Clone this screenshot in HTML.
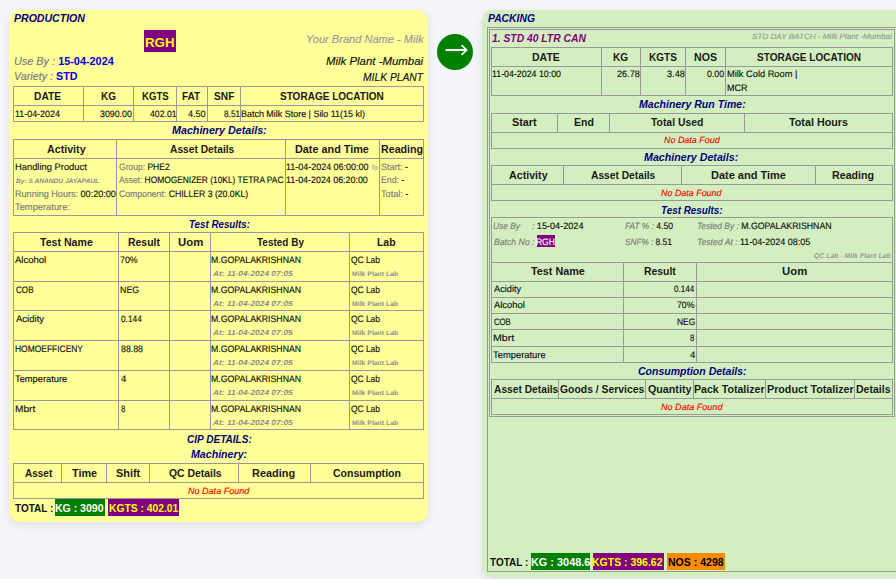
<!DOCTYPE html>
<html><head><meta charset="utf-8"><style>
html,body{margin:0;padding:0;width:896px;height:579px;overflow:hidden;background:#f4f5f9;font-family:"Liberation Sans", sans-serif;}
.t{position:absolute;line-height:0;white-space:nowrap;transform-origin:0 0;}
.gp{text-rendering:geometricPrecision;}
.t span.n{-webkit-text-stroke:0.15px currentColor;}
.l{position:absolute;}
.circ{position:absolute;}
.card{position:absolute;border-radius:11px;box-shadow:0 3px 9px rgba(0,0,0,0.09);}
</style></head><body>
<div class="card" style="left:9px;top:10px;width:419px;height:512px;background:#ffff99"></div>
<div id="t1" class="t" style="left:14.241px;top:18.492px;font-size:10.7px;transform:scaleX(0.9869)"><span class="b" style="font-size:10.7px;font-weight:bold;font-style:italic;color:#000080">PRODUCTION</span></div>
<div class="l" style="left:144px;top:30px;width:32px;height:22px;background:#800080;"></div>
<div id="t2" class="t" style="left:144.718px;top:42.557px;font-size:13.4px;transform:scaleX(0.9936)"><span class="b" style="font-size:13.4px;font-weight:bold;font-style:normal;color:#ffff00">RGH</span></div>
<div id="t3" class="t" style="left:305.984px;top:38.527px;font-size:10.6px;transform:scaleX(1.0441)"><span class="n" style="font-size:10.6px;font-weight:normal;font-style:italic;color:#9a9a9a">Your Brand Name - Milk</span></div>
<div id="t4" class="t" style="left:13.590px;top:61.596px;font-size:10.4px;transform:scaleX(1.0468)"><span class="n" style="font-size:10.4px;font-weight:normal;font-style:italic;color:#7a7a7a">Use By : </span><span class="b" style="font-size:10.4px;font-weight:bold;font-style:normal;color:#0000e6">15-04-2024</span></div>
<div id="t5" class="t" style="left:326.401px;top:60.527px;font-size:10.6px;transform:scaleX(1.0775)"><span class="n" style="font-size:10.6px;font-weight:normal;font-style:italic;color:#111">Milk Plant -Mumbai</span></div>
<div id="t6" class="t" style="left:13.582px;top:76.596px;font-size:10.4px;transform:scaleX(1.0331)"><span class="n" style="font-size:10.4px;font-weight:normal;font-style:italic;color:#7a7a7a">Variety : </span><span class="b" style="font-size:10.4px;font-weight:bold;font-style:normal;color:#0000e6">STD</span></div>
<div id="t7" class="t" style="left:362.811px;top:76.527px;font-size:10.6px;transform:scaleX(0.9716)"><span class="n" style="font-size:10.6px;font-weight:normal;font-style:italic;color:#111">MILK PLANT</span></div>
<div class="l" style="left:13px;top:86px;width:411px;height:1px;background:#999"></div>
<div class="l" style="left:13px;top:105px;width:411px;height:1px;background:#999"></div>
<div class="l" style="left:13px;top:121px;width:411px;height:1px;background:#999"></div>
<div class="l" style="left:13px;top:86px;width:1px;height:36px;background:#999"></div>
<div class="l" style="left:423px;top:86px;width:1px;height:36px;background:#999"></div>
<div class="l" style="left:83px;top:86px;width:1px;height:36px;background:#999"></div>
<div class="l" style="left:133px;top:86px;width:1px;height:36px;background:#999"></div>
<div class="l" style="left:176px;top:86px;width:1px;height:36px;background:#999"></div>
<div class="l" style="left:207px;top:86px;width:1px;height:36px;background:#999"></div>
<div class="l" style="left:240px;top:86px;width:1px;height:36px;background:#999"></div>
<div id="t8" class="t" style="left:34.312px;top:96.596px;font-size:10.4px;transform:scaleX(0.9834)"><span class="b" style="font-size:10.4px;font-weight:bold;font-style:normal;color:#1a1a1a">DATE</span></div>
<div id="t9" class="t" style="left:100.849px;top:96.596px;font-size:10.4px;transform:scaleX(0.9621)"><span class="b" style="font-size:10.4px;font-weight:bold;font-style:normal;color:#1a1a1a">KG</span></div>
<div id="t10" class="t" style="left:141.695px;top:96.596px;font-size:10.4px;transform:scaleX(0.9281)"><span class="b" style="font-size:10.4px;font-weight:bold;font-style:normal;color:#1a1a1a">KGTS</span></div>
<div id="t11" class="t" style="left:181.895px;top:96.596px;font-size:10.4px;transform:scaleX(0.9663)"><span class="b" style="font-size:10.4px;font-weight:bold;font-style:normal;color:#1a1a1a">FAT</span></div>
<div id="t12" class="t" style="left:213.881px;top:96.596px;font-size:10.4px;transform:scaleX(0.9797)"><span class="b" style="font-size:10.4px;font-weight:bold;font-style:normal;color:#1a1a1a">SNF</span></div>
<div id="t13" class="t" style="left:280.096px;top:96.596px;font-size:10.4px;transform:scaleX(0.9642)"><span class="b" style="font-size:10.4px;font-weight:bold;font-style:normal;color:#1a1a1a">STORAGE LOCATION</span></div>
<div id="t14" class="t gp" style="left:14.500px;top:113.943px;font-size:9.4px;transform:scaleX(0.9488)"><span class="n" style="font-size:9.4px;font-weight:normal;font-style:normal;color:#111">11-04-2024</span></div>
<div id="t15" class="t gp" style="left:100.323px;top:113.943px;font-size:9.4px;transform:scaleX(0.9404)"><span class="n" style="font-size:9.4px;font-weight:normal;font-style:normal;color:#111">3090.00</span></div>
<div id="t16" class="t gp" style="left:150.000px;top:113.943px;font-size:9.4px;transform:scaleX(0.9253)"><span class="n" style="font-size:9.4px;font-weight:normal;font-style:normal;color:#111">402.01</span></div>
<div id="t17" class="t gp" style="left:188.398px;top:113.943px;font-size:9.4px;transform:scaleX(0.9675)"><span class="n" style="font-size:9.4px;font-weight:normal;font-style:normal;color:#111">4.50</span></div>
<div id="t18" class="t gp" style="left:223.968px;top:113.943px;font-size:9.4px;transform:scaleX(0.8796)"><span class="n" style="font-size:9.4px;font-weight:normal;font-style:normal;color:#111">8.51</span></div>
<div id="t19" class="t gp" style="left:240.987px;top:113.943px;font-size:9.4px;transform:scaleX(0.9541)"><span class="n" style="font-size:9.4px;font-weight:normal;font-style:normal;color:#111">Batch Milk Store | Silo 11(15 kl)</span></div>
<div id="t20" class="t" style="left:172.212px;top:130.596px;font-size:10.4px;transform:scaleX(1.0309)"><span class="b" style="font-size:10.4px;font-weight:bold;font-style:italic;color:#000080">Machinery Details:</span></div>
<div class="l" style="left:13px;top:139px;width:411px;height:1px;background:#999"></div>
<div class="l" style="left:13px;top:158px;width:411px;height:1px;background:#999"></div>
<div class="l" style="left:13px;top:215px;width:411px;height:1px;background:#999"></div>
<div class="l" style="left:13px;top:139px;width:1px;height:77px;background:#999"></div>
<div class="l" style="left:423px;top:139px;width:1px;height:77px;background:#999"></div>
<div class="l" style="left:116px;top:139px;width:1px;height:77px;background:#999"></div>
<div class="l" style="left:285px;top:139px;width:1px;height:77px;background:#999"></div>
<div class="l" style="left:379px;top:139px;width:1px;height:77px;background:#999"></div>
<div id="t21" class="t" style="left:46.984px;top:149.596px;font-size:10.4px;transform:scaleX(1.0280)"><span class="b" style="font-size:10.4px;font-weight:bold;font-style:normal;color:#1a1a1a">Activity</span></div>
<div id="t22" class="t" style="left:170.000px;top:149.596px;font-size:10.4px;transform:scaleX(0.9849)"><span class="b" style="font-size:10.4px;font-weight:bold;font-style:normal;color:#1a1a1a">Asset Details</span></div>
<div id="t23" class="t" style="left:294.990px;top:149.596px;font-size:10.4px;transform:scaleX(1.0430)"><span class="b" style="font-size:10.4px;font-weight:bold;font-style:normal;color:#1a1a1a">Date and Time</span></div>
<div id="t24" class="t" style="left:380.948px;top:149.596px;font-size:10.4px;transform:scaleX(1.0264)"><span class="b" style="font-size:10.4px;font-weight:bold;font-style:normal;color:#1a1a1a">Reading</span></div>
<div id="t25" class="t gp" style="left:14.798px;top:166.943px;font-size:9.4px;transform:scaleX(0.9982)"><span class="n" style="font-size:9.4px;font-weight:normal;font-style:normal;color:#111">Handling Product</span></div>
<div id="t26" class="t gp" style="left:15.794px;top:181.982px;font-size:6.4px;transform:scaleX(1.0327)"><span class="b" style="font-size:6.4px;font-weight:bold;font-style:italic;color:#8a8a8a">By: S ANANDU JAYAPAUL</span></div>
<div id="t27" class="t gp" style="left:14.782px;top:193.943px;font-size:9.4px;transform:scaleX(0.9676)"><span class="n" style="font-size:9.4px;font-weight:normal;font-style:normal;color:#7a7a7a">Running Hours: </span><span class="n" style="font-size:9.4px;font-weight:normal;font-style:normal;color:#111">00:20:00</span></div>
<div id="t28" class="t gp" style="left:14.722px;top:206.943px;font-size:9.4px;transform:scaleX(0.9953)"><span class="n" style="font-size:9.4px;font-weight:normal;font-style:normal;color:#7a7a7a">Temperature:</span></div>
<div id="t29" class="t gp" style="left:118.585px;top:166.943px;font-size:9.4px;transform:scaleX(0.9088)"><span class="n" style="font-size:9.4px;font-weight:normal;font-style:normal;color:#7a7a7a">Group: </span><span class="n" style="font-size:9.4px;font-weight:normal;font-style:normal;color:#111">PHE2</span></div>
<div id="t30" class="t gp" style="left:118.595px;top:179.943px;font-size:9.4px;transform:scaleX(0.8934)"><span class="n" style="font-size:9.4px;font-weight:normal;font-style:normal;color:#7a7a7a">Asset: </span><span class="n" style="font-size:9.4px;font-weight:normal;font-style:normal;color:#111">HOMOGENIZER (10KL) TETRA PAC</span></div>
<div id="t31" class="t gp" style="left:118.603px;top:193.943px;font-size:9.4px;transform:scaleX(0.9245)"><span class="n" style="font-size:9.4px;font-weight:normal;font-style:normal;color:#7a7a7a">Component: </span><span class="n" style="font-size:9.4px;font-weight:normal;font-style:normal;color:#111">CHILLER 3 (20.0KL)</span></div>
<div id="t32" class="t gp" style="left:286.192px;top:166.943px;font-size:9.4px;transform:scaleX(0.9545)"><span class="n" style="font-size:9.4px;font-weight:normal;font-style:normal;color:#111">11-04-2024 06:00:00 </span><span class="n" style="font-size:6.5px;font-weight:normal;font-style:italic;color:#9a9a9a">To</span></div>
<div id="t33" class="t gp" style="left:286.176px;top:179.943px;font-size:9.4px;transform:scaleX(0.9470)"><span class="n" style="font-size:9.4px;font-weight:normal;font-style:normal;color:#111">11-04-2024 06:20:00</span></div>
<div id="t34" class="t gp" style="left:380.761px;top:166.943px;font-size:9.4px;transform:scaleX(0.9583)"><span class="n" style="font-size:9.4px;font-weight:normal;font-style:normal;color:#7a7a7a">Start: </span><span class="n" style="font-size:9.4px;font-weight:normal;font-style:normal;color:#111">-</span></div>
<div id="t35" class="t gp" style="left:380.727px;top:179.943px;font-size:9.4px;transform:scaleX(0.9302)"><span class="n" style="font-size:9.4px;font-weight:normal;font-style:normal;color:#7a7a7a">End: </span><span class="n" style="font-size:9.4px;font-weight:normal;font-style:normal;color:#111">-</span></div>
<div id="t36" class="t gp" style="left:380.739px;top:193.943px;font-size:9.4px;transform:scaleX(0.9730)"><span class="n" style="font-size:9.4px;font-weight:normal;font-style:normal;color:#7a7a7a">Total: </span><span class="n" style="font-size:9.4px;font-weight:normal;font-style:normal;color:#111">-</span></div>
<div id="t37" class="t" style="left:188.975px;top:224.596px;font-size:10.4px;transform:scaleX(0.9391)"><span class="b" style="font-size:10.4px;font-weight:bold;font-style:italic;color:#000080">Test Results:</span></div>
<div class="l" style="left:13px;top:232px;width:411px;height:1px;background:#999"></div>
<div class="l" style="left:13px;top:251px;width:411px;height:1px;background:#999"></div>
<div class="l" style="left:13px;top:281px;width:411px;height:1px;background:#999"></div>
<div class="l" style="left:13px;top:310px;width:411px;height:1px;background:#999"></div>
<div class="l" style="left:13px;top:340px;width:411px;height:1px;background:#999"></div>
<div class="l" style="left:13px;top:370px;width:411px;height:1px;background:#999"></div>
<div class="l" style="left:13px;top:400px;width:411px;height:1px;background:#999"></div>
<div class="l" style="left:13px;top:429px;width:411px;height:1px;background:#999"></div>
<div class="l" style="left:13px;top:232px;width:1px;height:198px;background:#999"></div>
<div class="l" style="left:423px;top:232px;width:1px;height:198px;background:#999"></div>
<div class="l" style="left:118px;top:232px;width:1px;height:198px;background:#999"></div>
<div class="l" style="left:169px;top:232px;width:1px;height:198px;background:#999"></div>
<div class="l" style="left:210px;top:232px;width:1px;height:198px;background:#999"></div>
<div class="l" style="left:349px;top:232px;width:1px;height:198px;background:#999"></div>
<div id="t38" class="t" style="left:40.003px;top:242.596px;font-size:10.4px;transform:scaleX(1.0191)"><span class="b" style="font-size:10.4px;font-weight:bold;font-style:normal;color:#1a1a1a">Test Name</span></div>
<div id="t39" class="t" style="left:127.964px;top:242.596px;font-size:10.4px;transform:scaleX(1.0039)"><span class="b" style="font-size:10.4px;font-weight:bold;font-style:normal;color:#1a1a1a">Result</span></div>
<div id="t40" class="t" style="left:177.939px;top:242.596px;font-size:10.4px;transform:scaleX(1.0945)"><span class="b" style="font-size:10.4px;font-weight:bold;font-style:normal;color:#1a1a1a">Uom</span></div>
<div id="t41" class="t" style="left:256.987px;top:242.596px;font-size:10.4px;transform:scaleX(0.9599)"><span class="b" style="font-size:10.4px;font-weight:bold;font-style:normal;color:#1a1a1a">Tested By</span></div>
<div id="t42" class="t" style="left:376.950px;top:242.596px;font-size:10.4px;transform:scaleX(1.0027)"><span class="b" style="font-size:10.4px;font-weight:bold;font-style:normal;color:#1a1a1a">Lab</span></div>
<div id="t43" class="t gp" style="left:15.267px;top:259.943px;font-size:9.4px;transform:scaleX(1.0139)"><span class="n" style="font-size:9.4px;font-weight:normal;font-style:normal;color:#111">Alcohol</span></div>
<div id="t44" class="t gp" style="left:119.676px;top:259.943px;font-size:9.4px;transform:scaleX(0.9401)"><span class="n" style="font-size:9.4px;font-weight:normal;font-style:normal;color:#111">70%</span></div>
<div id="t45" class="t gp" style="left:211.493px;top:259.943px;font-size:9.4px;transform:scaleX(0.9315)"><span class="n" style="font-size:9.4px;font-weight:normal;font-style:normal;color:#111">M.GOPALAKRISHNAN</span></div>
<div id="t46" class="t gp" style="left:212.751px;top:273.636px;font-size:7.4px;transform:scaleX(1.1303)"><span class="b" style="font-size:7.4px;font-weight:bold;font-style:italic;color:#8a8a8a">At: 11-04-2024 07:05</span></div>
<div id="t47" class="t gp" style="left:351.361px;top:259.943px;font-size:9.4px;transform:scaleX(0.8956)"><span class="n" style="font-size:9.4px;font-weight:normal;font-style:normal;color:#111">QC Lab</span></div>
<div id="t48" class="t gp" style="left:351.570px;top:274.948px;font-size:6.5px;transform:scaleX(1.0584)"><span class="b" style="font-size:6.5px;font-weight:bold;font-style:normal;color:#8f8f8f">Milk Plant Lab</span></div>
<div id="t49" class="t gp" style="left:15.708px;top:289.943px;font-size:9.4px;transform:scaleX(0.8624)"><span class="n" style="font-size:9.4px;font-weight:normal;font-style:normal;color:#111">COB</span></div>
<div id="t50" class="t gp" style="left:119.661px;top:289.943px;font-size:9.4px;transform:scaleX(0.9425)"><span class="n" style="font-size:9.4px;font-weight:normal;font-style:normal;color:#111">NEG</span></div>
<div id="t51" class="t gp" style="left:211.493px;top:289.943px;font-size:9.4px;transform:scaleX(0.9315)"><span class="n" style="font-size:9.4px;font-weight:normal;font-style:normal;color:#111">M.GOPALAKRISHNAN</span></div>
<div id="t52" class="t gp" style="left:212.751px;top:303.636px;font-size:7.4px;transform:scaleX(1.1303)"><span class="b" style="font-size:7.4px;font-weight:bold;font-style:italic;color:#8a8a8a">At: 11-04-2024 07:05</span></div>
<div id="t53" class="t gp" style="left:351.361px;top:289.943px;font-size:9.4px;transform:scaleX(0.8956)"><span class="n" style="font-size:9.4px;font-weight:normal;font-style:normal;color:#111">QC Lab</span></div>
<div id="t54" class="t gp" style="left:351.570px;top:304.948px;font-size:6.5px;transform:scaleX(1.0584)"><span class="b" style="font-size:6.5px;font-weight:bold;font-style:normal;color:#8f8f8f">Milk Plant Lab</span></div>
<div id="t55" class="t gp" style="left:15.719px;top:318.943px;font-size:9.4px;transform:scaleX(1.0158)"><span class="n" style="font-size:9.4px;font-weight:normal;font-style:normal;color:#111">Acidity</span></div>
<div id="t56" class="t gp" style="left:120.679px;top:318.943px;font-size:9.4px;transform:scaleX(0.8857)"><span class="n" style="font-size:9.4px;font-weight:normal;font-style:normal;color:#111">0.144</span></div>
<div id="t57" class="t gp" style="left:211.493px;top:318.943px;font-size:9.4px;transform:scaleX(0.9315)"><span class="n" style="font-size:9.4px;font-weight:normal;font-style:normal;color:#111">M.GOPALAKRISHNAN</span></div>
<div id="t58" class="t gp" style="left:212.751px;top:332.636px;font-size:7.4px;transform:scaleX(1.1303)"><span class="b" style="font-size:7.4px;font-weight:bold;font-style:italic;color:#8a8a8a">At: 11-04-2024 07:05</span></div>
<div id="t59" class="t gp" style="left:351.361px;top:318.943px;font-size:9.4px;transform:scaleX(0.8956)"><span class="n" style="font-size:9.4px;font-weight:normal;font-style:normal;color:#111">QC Lab</span></div>
<div id="t60" class="t gp" style="left:351.570px;top:333.948px;font-size:6.5px;transform:scaleX(1.0584)"><span class="b" style="font-size:6.5px;font-weight:bold;font-style:normal;color:#8f8f8f">Milk Plant Lab</span></div>
<div id="t61" class="t gp" style="left:14.731px;top:348.943px;font-size:9.4px;transform:scaleX(0.9004)"><span class="n" style="font-size:9.4px;font-weight:normal;font-style:normal;color:#111">HOMOEFFICENY</span></div>
<div id="t62" class="t gp" style="left:120.682px;top:348.943px;font-size:9.4px;transform:scaleX(0.9384)"><span class="n" style="font-size:9.4px;font-weight:normal;font-style:normal;color:#111">88.88</span></div>
<div id="t63" class="t gp" style="left:211.493px;top:348.943px;font-size:9.4px;transform:scaleX(0.9315)"><span class="n" style="font-size:9.4px;font-weight:normal;font-style:normal;color:#111">M.GOPALAKRISHNAN</span></div>
<div id="t64" class="t gp" style="left:212.751px;top:362.636px;font-size:7.4px;transform:scaleX(1.1303)"><span class="b" style="font-size:7.4px;font-weight:bold;font-style:italic;color:#8a8a8a">At: 11-04-2024 07:05</span></div>
<div id="t65" class="t gp" style="left:351.361px;top:348.943px;font-size:9.4px;transform:scaleX(0.8956)"><span class="n" style="font-size:9.4px;font-weight:normal;font-style:normal;color:#111">QC Lab</span></div>
<div id="t66" class="t gp" style="left:351.570px;top:363.948px;font-size:6.5px;transform:scaleX(1.0584)"><span class="b" style="font-size:6.5px;font-weight:bold;font-style:normal;color:#8f8f8f">Milk Plant Lab</span></div>
<div id="t67" class="t gp" style="left:14.705px;top:378.943px;font-size:9.4px;transform:scaleX(0.9914)"><span class="n" style="font-size:9.4px;font-weight:normal;font-style:normal;color:#111">Temperature</span></div>
<div id="t68" class="t gp" style="left:120.698px;top:378.943px;font-size:9.4px;transform:scaleX(1.0283)"><span class="n" style="font-size:9.4px;font-weight:normal;font-style:normal;color:#111">4</span></div>
<div id="t69" class="t gp" style="left:211.493px;top:378.943px;font-size:9.4px;transform:scaleX(0.9315)"><span class="n" style="font-size:9.4px;font-weight:normal;font-style:normal;color:#111">M.GOPALAKRISHNAN</span></div>
<div id="t70" class="t gp" style="left:212.751px;top:392.636px;font-size:7.4px;transform:scaleX(1.1303)"><span class="b" style="font-size:7.4px;font-weight:bold;font-style:italic;color:#8a8a8a">At: 11-04-2024 07:05</span></div>
<div id="t71" class="t gp" style="left:351.361px;top:378.943px;font-size:9.4px;transform:scaleX(0.8956)"><span class="n" style="font-size:9.4px;font-weight:normal;font-style:normal;color:#111">QC Lab</span></div>
<div id="t72" class="t gp" style="left:351.570px;top:393.948px;font-size:6.5px;transform:scaleX(1.0584)"><span class="b" style="font-size:6.5px;font-weight:bold;font-style:normal;color:#8f8f8f">Milk Plant Lab</span></div>
<div id="t73" class="t gp" style="left:14.732px;top:408.943px;font-size:9.4px;transform:scaleX(1.0778)"><span class="n" style="font-size:9.4px;font-weight:normal;font-style:normal;color:#111">Mbrt</span></div>
<div id="t74" class="t gp" style="left:120.724px;top:408.943px;font-size:9.4px;transform:scaleX(0.8227)"><span class="n" style="font-size:9.4px;font-weight:normal;font-style:normal;color:#111">8</span></div>
<div id="t75" class="t gp" style="left:211.493px;top:408.943px;font-size:9.4px;transform:scaleX(0.9315)"><span class="n" style="font-size:9.4px;font-weight:normal;font-style:normal;color:#111">M.GOPALAKRISHNAN</span></div>
<div id="t76" class="t gp" style="left:212.751px;top:422.636px;font-size:7.4px;transform:scaleX(1.1303)"><span class="b" style="font-size:7.4px;font-weight:bold;font-style:italic;color:#8a8a8a">At: 11-04-2024 07:05</span></div>
<div id="t77" class="t gp" style="left:351.361px;top:408.943px;font-size:9.4px;transform:scaleX(0.8956)"><span class="n" style="font-size:9.4px;font-weight:normal;font-style:normal;color:#111">QC Lab</span></div>
<div id="t78" class="t gp" style="left:351.570px;top:423.948px;font-size:6.5px;transform:scaleX(1.0584)"><span class="b" style="font-size:6.5px;font-weight:bold;font-style:normal;color:#8f8f8f">Milk Plant Lab</span></div>
<div id="t79" class="t" style="left:186.790px;top:439.596px;font-size:10.4px;transform:scaleX(0.9677)"><span class="b" style="font-size:10.4px;font-weight:bold;font-style:italic;color:#000080">CIP DETAILS:</span></div>
<div id="t80" class="t" style="left:190.803px;top:454.596px;font-size:10.4px;transform:scaleX(1.0227)"><span class="b" style="font-size:10.4px;font-weight:bold;font-style:italic;color:#000080">Machinery:</span></div>
<div class="l" style="left:13px;top:463px;width:411px;height:1px;background:#999"></div>
<div class="l" style="left:13px;top:482px;width:411px;height:1px;background:#999"></div>
<div class="l" style="left:13px;top:498px;width:411px;height:1px;background:#999"></div>
<div class="l" style="left:13px;top:463px;width:1px;height:36px;background:#999"></div>
<div class="l" style="left:423px;top:463px;width:1px;height:36px;background:#999"></div>
<div class="l" style="left:61px;top:463px;width:1px;height:20px;background:#999"></div>
<div class="l" style="left:106px;top:463px;width:1px;height:20px;background:#999"></div>
<div class="l" style="left:149px;top:463px;width:1px;height:20px;background:#999"></div>
<div class="l" style="left:238px;top:463px;width:1px;height:20px;background:#999"></div>
<div class="l" style="left:310px;top:463px;width:1px;height:20px;background:#999"></div>
<div id="t81" class="t" style="left:25.000px;top:473.596px;font-size:10.4px;transform:scaleX(0.9638)"><span class="b" style="font-size:10.4px;font-weight:bold;font-style:normal;color:#1a1a1a">Asset</span></div>
<div id="t82" class="t" style="left:72.000px;top:473.596px;font-size:10.4px;transform:scaleX(1.0442)"><span class="b" style="font-size:10.4px;font-weight:bold;font-style:normal;color:#1a1a1a">Time</span></div>
<div id="t83" class="t" style="left:115.965px;top:473.596px;font-size:10.4px;transform:scaleX(1.0458)"><span class="b" style="font-size:10.4px;font-weight:bold;font-style:normal;color:#1a1a1a">Shift</span></div>
<div id="t84" class="t" style="left:168.976px;top:473.596px;font-size:10.4px;transform:scaleX(1.0009)"><span class="b" style="font-size:10.4px;font-weight:bold;font-style:normal;color:#1a1a1a">QC Details</span></div>
<div id="t85" class="t" style="left:251.999px;top:473.596px;font-size:10.4px;transform:scaleX(1.0505)"><span class="b" style="font-size:10.4px;font-weight:bold;font-style:normal;color:#1a1a1a">Reading</span></div>
<div id="t86" class="t" style="left:333.000px;top:473.596px;font-size:10.4px;transform:scaleX(1.0149)"><span class="b" style="font-size:10.4px;font-weight:bold;font-style:normal;color:#1a1a1a">Consumption</span></div>
<div id="t87" class="t gp" style="left:187.500px;top:491.082px;font-size:9.0px;transform:scaleX(1.0042)"><span class="n" style="font-size:9.0px;font-weight:normal;font-style:italic;color:#ff0000">No Data Found</span></div>
<div id="t88" class="t" style="left:15.000px;top:508.458px;font-size:10.8px;transform:scaleX(0.9232)"><span class="b" style="font-size:10.8px;font-weight:bold;font-style:normal;color:#111">TOTAL :</span></div>
<div class="l" style="left:55px;top:499px;width:50px;height:17px;background:#008000;"></div>
<div id="t89" class="t" style="left:55.389px;top:508.458px;font-size:10.8px;transform:scaleX(0.9741)"><span class="b" style="font-size:10.8px;font-weight:bold;font-style:normal;color:#ffffff">KG : 3090</span></div>
<div class="l" style="left:108px;top:499px;width:71px;height:17px;background:#800080;"></div>
<div id="t90" class="t" style="left:109.150px;top:508.458px;font-size:10.8px;transform:scaleX(0.9544)"><span class="b" style="font-size:10.8px;font-weight:bold;font-style:normal;color:#ffff00">KGTS : 402.01</span></div>
<div class="circ" style="left:437px;top:34px;width:36px;height:36px;border-radius:50%;background:#008000"></div>
<svg style="position:absolute;left:437px;top:34px" width="36" height="36"><path d="M8.5 16 H29" stroke="#fff" stroke-width="2.1" fill="none"/><path d="M24.6 11.1 L29.6 16 L24.6 20.9" stroke="#fff" stroke-width="1.7" fill="none"/></svg>
<div class="card" style="left:482px;top:10px;width:440px;height:567px;background:#d4efbf"></div>
<div id="t91" class="t" style="left:487.634px;top:18.666px;font-size:10.2px;transform:scaleX(1.0154)"><span class="b" style="font-size:10.2px;font-weight:bold;font-style:italic;color:#000080">PACKING</span></div>
<div class="l" style="left:487px;top:27px;width:1px;height:545px;background:#999"></div>
<div class="l" style="left:487px;top:27px;width:410px;height:1px;background:#999"></div>
<div class="l" style="left:487px;top:571px;width:410px;height:1px;background:#999"></div>
<div class="l" style="left:489px;top:29px;width:1px;height:388px;background:#999"></div>
<div class="l" style="left:489px;top:29px;width:406px;height:1px;background:#999"></div>
<div class="l" style="left:489px;top:416px;width:406px;height:1px;background:#999"></div>
<div class="l" style="left:894px;top:29px;width:1px;height:388px;background:#999"></div>
<div id="t92" class="t" style="left:492.403px;top:38.458px;font-size:10.8px;transform:scaleX(0.9558)"><span class="b" style="font-size:10.8px;font-weight:bold;font-style:italic;color:#800080">1. STD 40 LTR CAN</span></div>
<div id="t93" class="t gp" style="left:751.985px;top:36.532px;font-size:7.7px;transform:scaleX(1.0565)"><span class="n" style="font-size:7.7px;font-weight:normal;font-style:italic;color:#9a9a9a">STD DAY BATCH - Milk Plant -Mumbai</span></div>
<div class="l" style="left:491px;top:47px;width:402px;height:1px;background:#999"></div>
<div class="l" style="left:491px;top:66px;width:402px;height:1px;background:#999"></div>
<div class="l" style="left:491px;top:95px;width:402px;height:1px;background:#999"></div>
<div class="l" style="left:491px;top:47px;width:1px;height:49px;background:#999"></div>
<div class="l" style="left:892px;top:47px;width:1px;height:49px;background:#999"></div>
<div class="l" style="left:601px;top:47px;width:1px;height:49px;background:#999"></div>
<div class="l" style="left:640px;top:47px;width:1px;height:49px;background:#999"></div>
<div class="l" style="left:685px;top:47px;width:1px;height:49px;background:#999"></div>
<div class="l" style="left:725px;top:47px;width:1px;height:49px;background:#999"></div>
<div id="t94" class="t" style="left:532.398px;top:57.596px;font-size:10.4px;transform:scaleX(1.0120)"><span class="b" style="font-size:10.4px;font-weight:bold;font-style:normal;color:#1a1a1a">DATE</span></div>
<div id="t95" class="t" style="left:612.810px;top:57.596px;font-size:10.4px;transform:scaleX(0.9755)"><span class="b" style="font-size:10.4px;font-weight:bold;font-style:normal;color:#1a1a1a">KG</span></div>
<div id="t96" class="t" style="left:648.716px;top:57.596px;font-size:10.4px;transform:scaleX(0.9658)"><span class="b" style="font-size:10.4px;font-weight:bold;font-style:normal;color:#1a1a1a">KGTS</span></div>
<div id="t97" class="t" style="left:693.598px;top:57.596px;font-size:10.4px;transform:scaleX(1.0221)"><span class="b" style="font-size:10.4px;font-weight:bold;font-style:normal;color:#1a1a1a">NOS</span></div>
<div id="t98" class="t" style="left:757.201px;top:57.596px;font-size:10.4px;transform:scaleX(0.9670)"><span class="b" style="font-size:10.4px;font-weight:bold;font-style:normal;color:#1a1a1a">STORAGE LOCATION</span></div>
<div id="t99" class="t gp" style="left:491.585px;top:73.943px;font-size:9.4px;transform:scaleX(0.9409)"><span class="n" style="font-size:9.4px;font-weight:normal;font-style:normal;color:#111">11-04-2024 10:00</span></div>
<div id="t100" class="t gp" style="left:616.868px;top:73.943px;font-size:9.4px;transform:scaleX(0.9709)"><span class="n" style="font-size:9.4px;font-weight:normal;font-style:normal;color:#111">26.78</span></div>
<div id="t101" class="t gp" style="left:667.000px;top:73.943px;font-size:9.4px;transform:scaleX(0.9796)"><span class="n" style="font-size:9.4px;font-weight:normal;font-style:normal;color:#111">3.48</span></div>
<div id="t102" class="t gp" style="left:706.802px;top:73.943px;font-size:9.4px;transform:scaleX(0.9351)"><span class="n" style="font-size:9.4px;font-weight:normal;font-style:normal;color:#111">0.00</span></div>
<div id="t103" class="t gp" style="left:726.757px;top:73.943px;font-size:9.4px;transform:scaleX(0.9884)"><span class="n" style="font-size:9.4px;font-weight:normal;font-style:normal;color:#111">Milk Cold Room |</span></div>
<div id="t104" class="t gp" style="left:726.676px;top:87.943px;font-size:9.4px;transform:scaleX(0.9604)"><span class="n" style="font-size:9.4px;font-weight:normal;font-style:normal;color:#111">MCR</span></div>
<div id="t105" class="t" style="left:638.778px;top:104.596px;font-size:10.4px;transform:scaleX(1.0174)"><span class="b" style="font-size:10.4px;font-weight:bold;font-style:italic;color:#000080">Machinery Run Time:</span></div>
<div class="l" style="left:491px;top:113px;width:402px;height:1px;background:#999"></div>
<div class="l" style="left:491px;top:132px;width:402px;height:1px;background:#999"></div>
<div class="l" style="left:491px;top:148px;width:402px;height:1px;background:#999"></div>
<div class="l" style="left:491px;top:113px;width:1px;height:36px;background:#999"></div>
<div class="l" style="left:892px;top:113px;width:1px;height:36px;background:#999"></div>
<div class="l" style="left:557px;top:113px;width:1px;height:20px;background:#999"></div>
<div class="l" style="left:609px;top:113px;width:1px;height:20px;background:#999"></div>
<div class="l" style="left:744px;top:113px;width:1px;height:20px;background:#999"></div>
<div id="t106" class="t" style="left:511.990px;top:122.596px;font-size:10.4px;transform:scaleX(1.0417)"><span class="b" style="font-size:10.4px;font-weight:bold;font-style:normal;color:#1a1a1a">Start</span></div>
<div id="t107" class="t" style="left:573.812px;top:122.596px;font-size:10.4px;transform:scaleX(1.0142)"><span class="b" style="font-size:10.4px;font-weight:bold;font-style:normal;color:#1a1a1a">End</span></div>
<div id="t108" class="t" style="left:650.995px;top:122.596px;font-size:10.4px;transform:scaleX(1.0000)"><span class="b" style="font-size:10.4px;font-weight:bold;font-style:normal;color:#1a1a1a">Total Used</span></div>
<div id="t109" class="t" style="left:788.996px;top:122.596px;font-size:10.4px;transform:scaleX(1.0358)"><span class="b" style="font-size:10.4px;font-weight:bold;font-style:normal;color:#1a1a1a">Total Hours</span></div>
<div id="t110" class="t gp" style="left:664.238px;top:140.081px;font-size:9.0px;transform:scaleX(0.9926)"><span class="n" style="font-size:9.0px;font-weight:normal;font-style:italic;color:#ff0000">No Data Foud</span></div>
<div id="t111" class="t" style="left:644.203px;top:157.596px;font-size:10.4px;transform:scaleX(1.0263)"><span class="b" style="font-size:10.4px;font-weight:bold;font-style:italic;color:#000080">Machinery Details:</span></div>
<div class="l" style="left:491px;top:165px;width:402px;height:1px;background:#999"></div>
<div class="l" style="left:491px;top:184px;width:402px;height:1px;background:#999"></div>
<div class="l" style="left:491px;top:200px;width:402px;height:1px;background:#999"></div>
<div class="l" style="left:491px;top:165px;width:1px;height:36px;background:#999"></div>
<div class="l" style="left:892px;top:165px;width:1px;height:36px;background:#999"></div>
<div class="l" style="left:563px;top:165px;width:1px;height:20px;background:#999"></div>
<div class="l" style="left:681px;top:165px;width:1px;height:20px;background:#999"></div>
<div class="l" style="left:815px;top:165px;width:1px;height:20px;background:#999"></div>
<div id="t112" class="t" style="left:509.000px;top:175.596px;font-size:10.4px;transform:scaleX(1.0280)"><span class="b" style="font-size:10.4px;font-weight:bold;font-style:normal;color:#1a1a1a">Activity</span></div>
<div id="t113" class="t" style="left:591.000px;top:175.596px;font-size:10.4px;transform:scaleX(0.9848)"><span class="b" style="font-size:10.4px;font-weight:bold;font-style:normal;color:#1a1a1a">Asset Details</span></div>
<div id="t114" class="t" style="left:710.981px;top:175.596px;font-size:10.4px;transform:scaleX(1.0573)"><span class="b" style="font-size:10.4px;font-weight:bold;font-style:normal;color:#1a1a1a">Date and Time</span></div>
<div id="t115" class="t" style="left:831.985px;top:175.596px;font-size:10.4px;transform:scaleX(1.0259)"><span class="b" style="font-size:10.4px;font-weight:bold;font-style:normal;color:#1a1a1a">Reading</span></div>
<div id="t116" class="t gp" style="left:661.199px;top:193.081px;font-size:9.0px;transform:scaleX(0.9914)"><span class="n" style="font-size:9.0px;font-weight:normal;font-style:italic;color:#ff0000">No Data Found</span></div>
<div id="t117" class="t" style="left:660.676px;top:210.596px;font-size:10.4px;transform:scaleX(0.9501)"><span class="b" style="font-size:10.4px;font-weight:bold;font-style:italic;color:#000080">Test Results:</span></div>
<div class="l" style="left:491px;top:217px;width:402px;height:1px;background:#999"></div>
<div class="l" style="left:491px;top:217px;width:1px;height:46px;background:#999"></div>
<div class="l" style="left:892px;top:217px;width:1px;height:46px;background:#999"></div>
<div id="t118" class="t gp" style="left:492.602px;top:226.081px;font-size:9.0px;transform:scaleX(0.9279)"><span class="n" style="font-size:9.0px;font-weight:normal;font-style:italic;color:#7a7a7a">Use By</span></div>
<div id="t119" class="t gp" style="left:532.000px;top:225.943px;font-size:9.4px;transform:scaleX(0.9715)"><span class="n" style="font-size:9.0px;font-weight:normal;font-style:italic;color:#7a7a7a">: </span><span class="n" style="font-size:9.4px;font-weight:normal;font-style:normal;color:#111">15-04-2024</span></div>
<div id="t120" class="t gp" style="left:493.596px;top:242.081px;font-size:9.0px;transform:scaleX(0.9646)"><span class="n" style="font-size:9.0px;font-weight:normal;font-style:italic;color:#7a7a7a">Batch No :</span></div>
<div class="l" style="left:537px;top:235px;width:18px;height:12px;background:#800080;"></div>
<div id="t121" class="t gp" style="left:536.138px;top:241.943px;font-size:9.4px;transform:scaleX(0.9045)"><span class="n" style="font-size:9.4px;font-weight:normal;font-style:normal;color:#ffffff">RGH</span></div>
<div id="t122" class="t gp" style="left:625.401px;top:225.943px;font-size:9.4px;transform:scaleX(0.9285)"><span class="n" style="font-size:9.0px;font-weight:normal;font-style:italic;color:#7a7a7a">FAT % : </span><span class="n" style="font-size:9.4px;font-weight:normal;font-style:normal;color:#111">4.50</span></div>
<div id="t123" class="t gp" style="left:625.383px;top:241.943px;font-size:9.4px;transform:scaleX(0.9099)"><span class="n" style="font-size:9.0px;font-weight:normal;font-style:italic;color:#7a7a7a">SNF% : </span><span class="n" style="font-size:9.4px;font-weight:normal;font-style:normal;color:#111">8.51</span></div>
<div id="t124" class="t gp" style="left:696.991px;top:225.943px;font-size:9.4px;transform:scaleX(0.9351)"><span class="n" style="font-size:9.0px;font-weight:normal;font-style:italic;color:#7a7a7a">Tested By : </span><span class="n" style="font-size:9.4px;font-weight:normal;font-style:normal;color:#111">M.GOPALAKRISHNAN</span></div>
<div id="t125" class="t gp" style="left:696.991px;top:241.943px;font-size:9.4px;transform:scaleX(0.9578)"><span class="n" style="font-size:9.0px;font-weight:normal;font-style:italic;color:#7a7a7a">Tested At : </span><span class="n" style="font-size:9.4px;font-weight:normal;font-style:normal;color:#111">11-04-2024 08:05</span></div>
<div id="t126" class="t gp" style="left:814.402px;top:256.774px;font-size:7.0px;transform:scaleX(0.9799)"><span class="b" style="font-size:7.0px;font-weight:bold;font-style:italic;color:#9a9a9a">QC Lab - Milk Plant Lab</span></div>
<div class="l" style="left:491px;top:262px;width:402px;height:1px;background:#999"></div>
<div class="l" style="left:491px;top:281px;width:402px;height:1px;background:#999"></div>
<div class="l" style="left:491px;top:297px;width:402px;height:1px;background:#999"></div>
<div class="l" style="left:491px;top:313px;width:402px;height:1px;background:#999"></div>
<div class="l" style="left:491px;top:329px;width:402px;height:1px;background:#999"></div>
<div class="l" style="left:491px;top:346px;width:402px;height:1px;background:#999"></div>
<div class="l" style="left:491px;top:362px;width:402px;height:1px;background:#999"></div>
<div class="l" style="left:491px;top:262px;width:1px;height:101px;background:#999"></div>
<div class="l" style="left:892px;top:262px;width:1px;height:101px;background:#999"></div>
<div class="l" style="left:623px;top:262px;width:1px;height:101px;background:#999"></div>
<div class="l" style="left:696px;top:262px;width:1px;height:101px;background:#999"></div>
<div id="t127" class="t" style="left:530.999px;top:271.596px;font-size:10.4px;transform:scaleX(1.0383)"><span class="b" style="font-size:10.4px;font-weight:bold;font-style:normal;color:#1a1a1a">Test Name</span></div>
<div id="t128" class="t" style="left:643.957px;top:271.596px;font-size:10.4px;transform:scaleX(1.0026)"><span class="b" style="font-size:10.4px;font-weight:bold;font-style:normal;color:#1a1a1a">Result</span></div>
<div id="t129" class="t" style="left:781.882px;top:271.596px;font-size:10.4px;transform:scaleX(1.0944)"><span class="b" style="font-size:10.4px;font-weight:bold;font-style:normal;color:#1a1a1a">Uom</span></div>
<div id="t130" class="t gp" style="left:493.705px;top:288.943px;font-size:9.4px;transform:scaleX(0.9852)"><span class="n" style="font-size:9.4px;font-weight:normal;font-style:normal;color:#111">Acidity</span></div>
<div id="t131" class="t gp" style="left:673.724px;top:288.943px;font-size:9.4px;transform:scaleX(0.8634)"><span class="n" style="font-size:9.4px;font-weight:normal;font-style:normal;color:#111">0.144</span></div>
<div id="t132" class="t gp" style="left:493.710px;top:304.943px;font-size:9.4px;transform:scaleX(1.0011)"><span class="n" style="font-size:9.4px;font-weight:normal;font-style:normal;color:#111">Alcohol</span></div>
<div id="t133" class="t gp" style="left:676.986px;top:304.943px;font-size:9.4px;transform:scaleX(0.9347)"><span class="n" style="font-size:9.4px;font-weight:normal;font-style:normal;color:#111">70%</span></div>
<div id="t134" class="t gp" style="left:493.587px;top:321.943px;font-size:9.4px;transform:scaleX(0.8214)"><span class="n" style="font-size:9.4px;font-weight:normal;font-style:normal;color:#111">COB</span></div>
<div id="t135" class="t gp" style="left:676.562px;top:321.943px;font-size:9.4px;transform:scaleX(0.9040)"><span class="n" style="font-size:9.4px;font-weight:normal;font-style:normal;color:#111">NEG</span></div>
<div id="t136" class="t gp" style="left:492.657px;top:337.943px;font-size:9.4px;transform:scaleX(1.1311)"><span class="n" style="font-size:9.4px;font-weight:normal;font-style:normal;color:#111">Mbrt</span></div>
<div id="t137" class="t gp" style="left:690.000px;top:337.943px;font-size:9.4px;transform:scaleX(0.8227)"><span class="n" style="font-size:9.4px;font-weight:normal;font-style:normal;color:#111">8</span></div>
<div id="t138" class="t gp" style="left:492.691px;top:354.943px;font-size:9.4px;transform:scaleX(0.9997)"><span class="n" style="font-size:9.4px;font-weight:normal;font-style:normal;color:#111">Temperature</span></div>
<div id="t139" class="t gp" style="left:690.000px;top:354.943px;font-size:9.4px;transform:scaleX(1.0283)"><span class="n" style="font-size:9.4px;font-weight:normal;font-style:normal;color:#111">4</span></div>
<div id="t140" class="t" style="left:638.000px;top:371.596px;font-size:10.4px;transform:scaleX(1.0113)"><span class="b" style="font-size:10.4px;font-weight:bold;font-style:italic;color:#000080">Consumption Details:</span></div>
<div class="l" style="left:491px;top:379px;width:402px;height:1px;background:#999"></div>
<div class="l" style="left:491px;top:398px;width:402px;height:1px;background:#999"></div>
<div class="l" style="left:491px;top:414px;width:402px;height:1px;background:#999"></div>
<div class="l" style="left:491px;top:379px;width:1px;height:36px;background:#999"></div>
<div class="l" style="left:892px;top:379px;width:1px;height:36px;background:#999"></div>
<div class="l" style="left:558px;top:379px;width:1px;height:20px;background:#999"></div>
<div class="l" style="left:645px;top:379px;width:1px;height:20px;background:#999"></div>
<div class="l" style="left:693px;top:379px;width:1px;height:20px;background:#999"></div>
<div class="l" style="left:765px;top:379px;width:1px;height:20px;background:#999"></div>
<div class="l" style="left:854px;top:379px;width:1px;height:20px;background:#999"></div>
<div id="t141" class="t" style="left:493.600px;top:389.596px;font-size:10.4px;transform:scaleX(0.9848)"><span class="b" style="font-size:10.4px;font-weight:bold;font-style:normal;color:#1a1a1a">Asset Details</span></div>
<div id="t142" class="t" style="left:560.393px;top:389.596px;font-size:10.4px;transform:scaleX(1.0001)"><span class="b" style="font-size:10.4px;font-weight:bold;font-style:normal;color:#1a1a1a">Goods / Services</span></div>
<div id="t143" class="t" style="left:648.255px;top:389.596px;font-size:10.4px;transform:scaleX(1.0302)"><span class="b" style="font-size:10.4px;font-weight:bold;font-style:normal;color:#1a1a1a">Quantity</span></div>
<div id="t144" class="t" style="left:693.985px;top:389.596px;font-size:10.4px;transform:scaleX(1.0209)"><span class="b" style="font-size:10.4px;font-weight:bold;font-style:normal;color:#1a1a1a">Pack Totalizer</span></div>
<div id="t145" class="t" style="left:766.629px;top:389.596px;font-size:10.4px;transform:scaleX(1.0315)"><span class="b" style="font-size:10.4px;font-weight:bold;font-style:normal;color:#1a1a1a">Product Totalizer</span></div>
<div id="t146" class="t" style="left:855.958px;top:389.596px;font-size:10.4px;transform:scaleX(1.0141)"><span class="b" style="font-size:10.4px;font-weight:bold;font-style:normal;color:#1a1a1a">Details</span></div>
<div id="t147" class="t gp" style="left:660.593px;top:407.082px;font-size:9.0px;transform:scaleX(1.0067)"><span class="n" style="font-size:9.0px;font-weight:normal;font-style:italic;color:#ff0000">No Data Found</span></div>
<div id="t148" class="t" style="left:490.000px;top:562.458px;font-size:10.8px;transform:scaleX(0.9232)"><span class="b" style="font-size:10.8px;font-weight:bold;font-style:normal;color:#111">TOTAL :</span></div>
<div class="l" style="left:531px;top:553px;width:59px;height:17px;background:#008000;"></div>
<div id="t149" class="t" style="left:530.549px;top:562.458px;font-size:10.8px;transform:scaleX(1.0087)"><span class="b" style="font-size:10.8px;font-weight:bold;font-style:normal;color:#ffffff">KG : 3048.6</span></div>
<div class="l" style="left:593px;top:553px;width:71px;height:17px;background:#800080;"></div>
<div id="t150" class="t" style="left:592.390px;top:562.458px;font-size:10.8px;transform:scaleX(0.9708)"><span class="b" style="font-size:10.8px;font-weight:bold;font-style:normal;color:#ffff00">KGTS : 396.62</span></div>
<div class="l" style="left:667px;top:553px;width:58px;height:17px;background:#ff8c00;"></div>
<div id="t151" class="t" style="left:667.985px;top:562.458px;font-size:10.8px;transform:scaleX(0.9762)"><span class="b" style="font-size:10.8px;font-weight:bold;font-style:normal;color:#000000">NOS : 4298</span></div>
</body></html>
